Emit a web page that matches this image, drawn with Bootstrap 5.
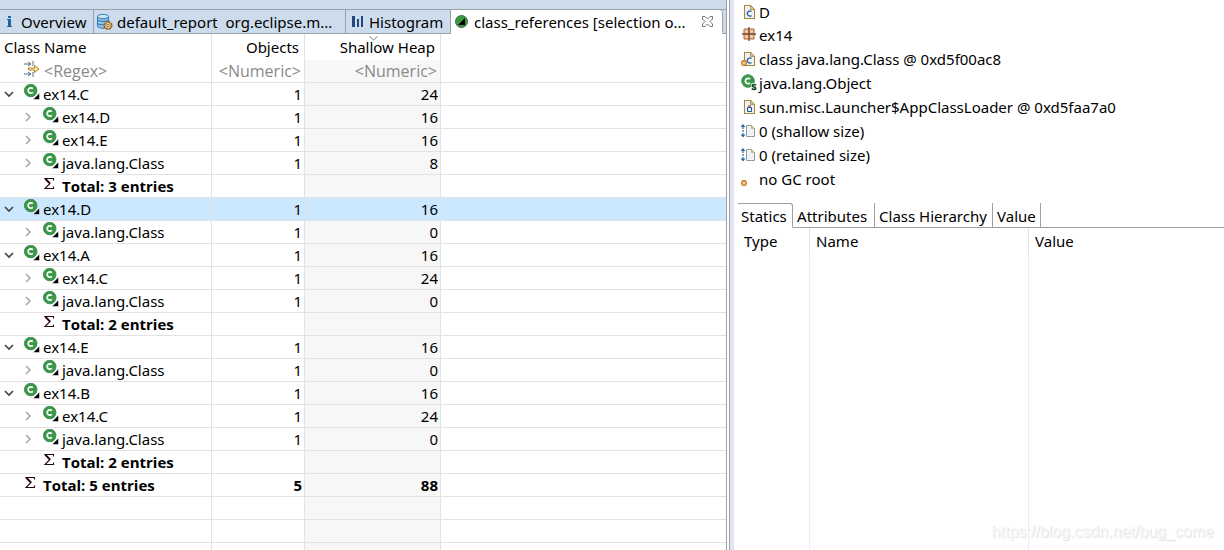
<!DOCTYPE html>
<html lang="en">
<head>
<meta charset="utf-8">
<meta name="viewport" content="width=device-width, initial-scale=1">
<title>Memory Analyzer</title>
<link href="https://cdn.jsdelivr.net/npm/bootstrap@5.3.0/dist/css/bootstrap.min.css" rel="stylesheet">
<style>
body { font-family: "Noto Sans", "Open Sans", sans-serif; font-size: 15px; line-height: 22px; color: #000; }
button { background: none; border: 0; padding: 0; color: inherit; }
svg { display: block; flex: none; }
.editor { flex: 0 0 59.4%; min-width: 0; border-right: 1px solid #a0a0a0; }
.sash { flex: 0 0 5px; margin-left: 2px; background: #e1e5f5; border-left: 1px solid #a0a0b0; }
.tabstrip { background: #cddcec; padding-top: 9px; }
.tabrow { border-top: 1px solid #9aa0a8; height: 25px; }
.etab { height: 24px; padding-right: 4px; border-right: 1px solid #9aa0a8; border-bottom: 1px solid #9aa0a8; white-space: pre; }
.tab-s { flex: 0 0 94px; }
.tab-m { flex: 0 0 105px; }
.tab-l { flex: 0 0 252px; }
.etab-on { background: #fff; border-bottom-color: #fff; border-top-right-radius: 4px; flex: 0 0 272px; }
.tabrest { border-bottom: 1px solid #9aa0a8; height: 24px; }
.grid-table { table-layout: fixed; width: 100%; border-collapse: separate; border-spacing: 0; }
.grid-table th { font-weight: 400; height: 26px; padding: 0 5px 0 4px; border-right: 1px solid #e2e2e2; }
.grid-table td { height: 23px; padding: 0 2px 0 4px; border-right: 1px solid #e2e2e2; border-bottom: 1px solid #e2e2e2; }
.grid-table th:last-child, .grid-table td:last-child { border-right: 0; }
.grid-table td:nth-child(3) { background: #f7f7f7; }
.grid-table td:nth-child(2), .grid-table td:nth-child(3), .grid-table th:nth-child(2), .grid-table th:nth-child(3) { text-align: right; }
.grid-table tr.chosen td { background: #cce8ff; }
.grid-table tr.fw-bold { font-family: "Open Sans", "Noto Sans", sans-serif; line-height: 20px; }
.cell { display: flex; align-items: center; height: 22px; white-space: nowrap; }
.cell button { flex: 0 0 20px; }
.cell svg.kind { margin: 0 3px 4px 0; }
.child { padding-left: 19px; }
.indent { padding-left: 20px; }
.indent2 { padding-left: 39px; }
.filter { border: 0; padding: 0 1px; background: none; width: 100%; height: 22px; outline: 0; font: 16px/22px "Open Sans", "Noto Sans", sans-serif; }
.filter::placeholder { color: #8a8a8a; opacity: 1; }
.info { height: 24px; padding-left: 6px; white-space: nowrap; }
.info svg { margin-right: 1px; }
.infolist { padding-bottom: 12px; }
.info:first-child { height: 23px; }
.itab { height: 25px; padding: 1px 4px 0; border-right: 1px solid #a0a0a0; border-bottom: 1px solid #a0a0a0; white-space: nowrap; text-align: left; }
.itab-on { border-top: 1px solid #a0a0a0; border-bottom-color: #fff; border-top-right-radius: 3px; padding: 0 3px; }
.itab-s { flex: 0 0 48px; }
.itab-on { flex: 0 0 55px; }
.itab-m { flex: 0 0 82px; }
.itab-l { flex: 0 0 118px; }
.itabrest { border-bottom: 1px solid #a0a0a0; }
.fieldtable { table-layout: fixed; width: 100%; border-collapse: separate; border-spacing: 0; }
.fieldtable th { font-weight: 400; height: 26px; padding: 0 6px; border-right: 1px solid #e2e2e2; }
.fieldtable td { border-right: 1px solid #e5effb; height: 100vh; }
.fieldtable th:last-child, .fieldtable td:last-child { border-right: 0; }
.watermark { right: 10px; bottom: 8px; font: 16px/20px "Liberation Sans", sans-serif; color: #f8f8f8; text-shadow: 1px 1px 1px #dedede; }
.sortmark { top: 2px; left: 64px; }
</style>
</head>
<body class="vh-100 overflow-hidden bg-white">
<svg width="0" height="0" class="position-absolute" aria-hidden="true">
  <defs>
    <symbol id="open" viewBox="0 0 10 10"><path d="M1 3l4 4 4-4" fill="none" stroke="#444" stroke-width="1.6"/></symbol>
    <symbol id="shut" viewBox="0 0 10 10"><path d="M3 1l4 4-4 4" fill="none" stroke="#a6a6a6" stroke-width="1.5"/></symbol>
    <symbol id="cls" viewBox="0 0 16 16"><circle cx="6.7" cy="6.5" r="6.3" fill="#3c9a46" stroke="#2d7c4c" stroke-width=".8"/><path d="M8.8 4.6A2.7 2.7 0 1 0 8.8 8.4" fill="none" stroke="#fff" stroke-width="1.7"/><path d="M15.5 9v6.5H9z" fill="#000" stroke="#fff" stroke-width=".5"/></symbol>
    <symbol id="sum" viewBox="0 0 16 16"><path d="M10.5 4.5V2.5H2L7 7.5 2 12.5h8.500v-2" fill="none" stroke="#2a0a10" stroke-width="1.1"/><path d="M2.500 3l4.500 4.500" stroke="#2a0a10" stroke-width="1.8"/></symbol>
    <symbol id="page" viewBox="0 0 18 18"><path d="M4.500 2.500h6l4 4v9h-10z" fill="#eef4fc" stroke="#a58a3c" stroke-width="1.100"/><path d="M10.500 2.500v4h4z" fill="#e2c98a" stroke="#a58a3c" stroke-width=".8"/></symbol>
    <symbol id="dot" viewBox="0 0 6 6"><circle cx="3" cy="3" r="2.400" fill="#fbc987" stroke="#c46a1c" stroke-width="1.100"/></symbol>
    <symbol id="size" viewBox="0 0 18 18"><path d="M3 5v2M3 8v2M3 11v2" stroke="#2a6ca8" stroke-width="1.200"/><path d="M.5 5L3 2 5.500 5zM.5 12.500L3 15.500 5.500 12.500z" fill="#2a6ca8"/><path d="M6.500 3.500h5l3 3v8h-8z" fill="#edf3fb" stroke="#9a9a8c"/><path d="M11.500 3.500v3h3z" fill="#e2c98a" stroke="#c5ac6c" stroke-width=".8"/></symbol>
  </defs>
</svg>
<div class="d-flex h-100">
  <main class="editor overflow-hidden">
    <div class="tabstrip">
      <div class="tabrow d-flex" role="tablist">
        <button class="etab tab-s d-flex align-items-center" role="tab"><svg width="21" height="16" viewBox="0 0 21 16"><path d="M8 2h3v2H8zM7 5h4v7h1v1H7v-1h1V6H7z" fill="#1d64a0"/></svg>Overview</button>
        <button class="etab tab-l d-flex align-items-center" role="tab"><svg width="23" height="18" viewBox="0 0 23 18"><path d="M3.500 3.500v9.500c0 3 11 3 11 0V3.500" fill="#8fc3e8" stroke="#3b7ab4"/><path d="M3.500 6.500c0 2.500 11 2.500 11 0M3.500 10c0 2.500 11 2.500 11 0" fill="none" stroke="#2f73ad"/><ellipse cx="9" cy="3.500" rx="5.500" ry="2.200" fill="#c9e7f8" stroke="#3b7ab4"/><circle cx="14" cy="12.500" r="3.700" fill="#f1d28a" stroke="#8a6425" stroke-width="1.800" stroke-dasharray="2 .9"/><circle cx="14" cy="12.500" r="3" fill="#f4dda0" stroke="#8a6425" stroke-width=".7"/><circle cx="14" cy="12.500" r="1.200" fill="#fff" stroke="#76501c" stroke-width=".8"/></svg>default_report  org.eclipse.m...</button>
        <button class="etab tab-m d-flex align-items-center" role="tab"><svg width="23" height="16" viewBox="0 0 23 16"><path d="M6 2h3v11H6zM11 5h2v8h-2zM15 2h2v11h-2z" fill="#24477c"/></svg>Histogram</button>
        <div class="etab etab-on d-flex align-items-center">
          <button class="d-flex align-items-center" role="tab" aria-selected="true"><svg width="23" height="16" viewBox="0 0 23 16"><circle cx="10.500" cy="7.500" r="6" fill="#3c9a3c" stroke="#3a6a52"/><path d="M14 4v7H7z" fill="#000"/></svg>class_references [selection o...</button>
          <button class="ms-auto me-1" aria-label="Close"><svg width="13" height="13" viewBox="0 0 13 13"><path d="M1.500 1.500h2.500l2.500 2.500 2.500-2.500h2.500v2.500L9 6.500l2.500 2.500v2.500H9L6.500 9 4 11.500H1.500V9L4 6.500 1.500 4z" fill="#fff" stroke="#666" stroke-width=".9"/></svg></button>
        </div>
        <div class="tabrest flex-grow-1"></div>
      </div>
    </div>
    <table class="grid-table">
      <colgroup><col style="width:212px"><col style="width:93px"><col style="width:136px"><col></colgroup>
      <thead><tr><th>Class Name</th><th>Objects</th><th class="position-relative">Shallow Heap<svg class="sortmark position-absolute" width="9" height="5" viewBox="0 0 9 5"><path d="M.5.5l4 3.500 4-3.500" fill="none" stroke="#777"/></svg></th><th></th></tr></thead>
      <tbody>
        <tr><td><div class="cell indent"><svg class="kind" width="16" height="16" viewBox="0 0 16 16"><path d="M0 3h7M0 13h7" stroke="#55718c"/><path d="M4 1l3 2-3 2M4 11l3 2-3 2M9 0v5M9 11v5" fill="none" stroke="#55718c"/><path d="M4.500 7h6V4.500L15 8l-4.500 3.500V9h-6z" fill="#fae3a0" stroke="#b68a30"/></svg><input class="filter" placeholder="&lt;Regex&gt;" aria-label="Class name filter"></div></td><td><input class="filter text-end" placeholder="&lt;Numeric&gt;" aria-label="Objects filter"></td><td><input class="filter text-end" placeholder="&lt;Numeric&gt;" aria-label="Shallow heap filter"></td><td></td></tr>
        <tr><td><div class="cell"><button aria-label="Collapse"><svg width="10" height="10"><use href="#open"/></svg></button><svg class="kind" width="16" height="16"><use href="#cls"/></svg>ex14.C</div></td><td>1</td><td>24</td><td></td></tr>
        <tr><td><div class="cell child"><button aria-label="Expand"><svg width="10" height="10"><use href="#shut"/></svg></button><svg class="kind" width="16" height="16"><use href="#cls"/></svg>ex14.D</div></td><td>1</td><td>16</td><td></td></tr>
        <tr><td><div class="cell child"><button aria-label="Expand"><svg width="10" height="10"><use href="#shut"/></svg></button><svg class="kind" width="16" height="16"><use href="#cls"/></svg>ex14.E</div></td><td>1</td><td>16</td><td></td></tr>
        <tr><td><div class="cell child"><button aria-label="Expand"><svg width="10" height="10"><use href="#shut"/></svg></button><svg class="kind" width="16" height="16"><use href="#cls"/></svg>java.lang.Class</div></td><td>1</td><td>8</td><td></td></tr>
        <tr class="fw-bold"><td><div class="cell indent2"><svg class="kind" width="16" height="16"><use href="#sum"/></svg>Total: 3 entries</div></td><td></td><td></td><td></td></tr>
        <tr class="chosen"><td><div class="cell"><button aria-label="Collapse"><svg width="10" height="10"><use href="#open"/></svg></button><svg class="kind" width="16" height="16"><use href="#cls"/></svg>ex14.D</div></td><td>1</td><td>16</td><td></td></tr>
        <tr><td><div class="cell child"><button aria-label="Expand"><svg width="10" height="10"><use href="#shut"/></svg></button><svg class="kind" width="16" height="16"><use href="#cls"/></svg>java.lang.Class</div></td><td>1</td><td>0</td><td></td></tr>
        <tr><td><div class="cell"><button aria-label="Collapse"><svg width="10" height="10"><use href="#open"/></svg></button><svg class="kind" width="16" height="16"><use href="#cls"/></svg>ex14.A</div></td><td>1</td><td>16</td><td></td></tr>
        <tr><td><div class="cell child"><button aria-label="Expand"><svg width="10" height="10"><use href="#shut"/></svg></button><svg class="kind" width="16" height="16"><use href="#cls"/></svg>ex14.C</div></td><td>1</td><td>24</td><td></td></tr>
        <tr><td><div class="cell child"><button aria-label="Expand"><svg width="10" height="10"><use href="#shut"/></svg></button><svg class="kind" width="16" height="16"><use href="#cls"/></svg>java.lang.Class</div></td><td>1</td><td>0</td><td></td></tr>
        <tr class="fw-bold"><td><div class="cell indent2"><svg class="kind" width="16" height="16"><use href="#sum"/></svg>Total: 2 entries</div></td><td></td><td></td><td></td></tr>
        <tr><td><div class="cell"><button aria-label="Collapse"><svg width="10" height="10"><use href="#open"/></svg></button><svg class="kind" width="16" height="16"><use href="#cls"/></svg>ex14.E</div></td><td>1</td><td>16</td><td></td></tr>
        <tr><td><div class="cell child"><button aria-label="Expand"><svg width="10" height="10"><use href="#shut"/></svg></button><svg class="kind" width="16" height="16"><use href="#cls"/></svg>java.lang.Class</div></td><td>1</td><td>0</td><td></td></tr>
        <tr><td><div class="cell"><button aria-label="Collapse"><svg width="10" height="10"><use href="#open"/></svg></button><svg class="kind" width="16" height="16"><use href="#cls"/></svg>ex14.B</div></td><td>1</td><td>16</td><td></td></tr>
        <tr><td><div class="cell child"><button aria-label="Expand"><svg width="10" height="10"><use href="#shut"/></svg></button><svg class="kind" width="16" height="16"><use href="#cls"/></svg>ex14.C</div></td><td>1</td><td>24</td><td></td></tr>
        <tr><td><div class="cell child"><button aria-label="Expand"><svg width="10" height="10"><use href="#shut"/></svg></button><svg class="kind" width="16" height="16"><use href="#cls"/></svg>java.lang.Class</div></td><td>1</td><td>0</td><td></td></tr>
        <tr class="fw-bold"><td><div class="cell indent2"><svg class="kind" width="16" height="16"><use href="#sum"/></svg>Total: 2 entries</div></td><td></td><td></td><td></td></tr>
        <tr class="fw-bold"><td><div class="cell indent"><svg class="kind" width="16" height="16"><use href="#sum"/></svg>Total: 5 entries</div></td><td>5</td><td>88</td><td></td></tr>
        <tr><td></td><td></td><td></td><td></td></tr>
        <tr><td></td><td></td><td></td><td></td></tr>
        <tr><td></td><td></td><td></td><td></td></tr>
      </tbody>
    </table>
  </main>
  <div class="sash"></div>
  <aside class="flex-grow-1 overflow-hidden position-relative">
    <div class="infolist">
      <div class="info d-flex align-items-center"><svg width="18" height="18" viewBox="0 0 18 18"><use href="#page"/><path d="M11.500 8.600a2.500 2.500 0 1 0 0 3.800" fill="none" stroke="#2a62a0" stroke-width="1.300"/></svg>D</div>
      <div class="info d-flex align-items-center"><svg width="18" height="18" viewBox="0 0 18 18"><path d="M4 3h10v10H4z" fill="#e8b98c" stroke="#a8694a"/><path d="M9 1v14M2 8h14" stroke="#784433" stroke-width="1.300"/><path d="M5.500 4.500h2v2h-2zM10.500 4.500h2v2h-2zM5.500 9.500h2v2h-2zM10.500 9.500h2v2h-2z" fill="#f5d9ae"/></svg>ex14</div>
      <div class="info d-flex align-items-center"><svg width="18" height="18" viewBox="0 0 18 18"><use href="#page"/><path d="M11.500 8.600a2.500 2.500 0 1 0 0 3.800" fill="none" stroke="#2a62a0" stroke-width="1.300"/><use href="#dot" x="1" y="10" width="6" height="6"/></svg>class java.lang.Class @ 0xd5f00ac8</div>
      <div class="info d-flex align-items-center"><svg width="18" height="18" viewBox="0 0 18 18"><circle cx="8" cy="7" r="6.300" fill="#3c9a46" stroke="#2d7c4c" stroke-width=".8"/><path d="M10 5.100a2.700 2.700 0 1 0 0 3.800" fill="none" stroke="#fff" stroke-width="1.700"/><path d="M16 11.300c-1.500-1.300-4-.8-3.800.6.200 1.500 3.600.7 3.600 2.300 0 1.500-2.700 1.500-4.100.4" fill="none" stroke="#fff" stroke-width="3"/><path d="M16 11.300c-1.500-1.300-4-.8-3.800.6.200 1.500 3.600.7 3.600 2.300 0 1.500-2.700 1.500-4.100.4" fill="none" stroke="#12401c" stroke-width="1.600"/></svg>java.lang.Object</div>
      <div class="info d-flex align-items-center"><svg width="18" height="18" viewBox="0 0 18 18"><use href="#page"/><path d="M7.500 9.500h4v4h-4z" fill="#d6e8fa" stroke="#25538c"/><path d="M8 8h3" stroke="#99471f" stroke-width="1.300"/><path d="M9 10.500h1.500v2H9z" fill="#fff"/></svg>sun.misc.Launcher$AppClassLoader @ 0xd5faa7a0</div>
      <div class="info d-flex align-items-center"><svg width="18" height="18"><use href="#size"/></svg>0 (shallow size)</div>
      <div class="info d-flex align-items-center"><svg width="18" height="18"><use href="#size"/></svg>0 (retained size)</div>
      <div class="info d-flex align-items-center"><svg width="18" height="18"><use href="#dot" x="1" y="10" width="6" height="6"/></svg>no GC root</div>
    </div>
    <div class="d-flex ps-1" role="tablist">
      <button class="itab itab-on" role="tab" aria-selected="true">Statics</button>
      <button class="itab itab-m" role="tab">Attributes</button>
      <button class="itab itab-l" role="tab">Class Hierarchy</button>
      <button class="itab itab-s" role="tab">Value</button>
      <div class="itabrest flex-grow-1"></div>
    </div>
    <table class="fieldtable ms-1">
      <colgroup><col style="width:72px"><col style="width:219px"><col></colgroup>
      <thead><tr><th>Type</th><th>Name</th><th>Value</th></tr></thead>
      <tbody><tr><td></td><td></td><td></td></tr></tbody>
    </table>
    <div class="watermark position-absolute">https://blog.csdn.net/bug_come</div>
  </aside>
</div>
<script src="https://cdn.jsdelivr.net/npm/bootstrap@5.3.0/dist/js/bootstrap.bundle.min.js"></script>
</body>
</html>
